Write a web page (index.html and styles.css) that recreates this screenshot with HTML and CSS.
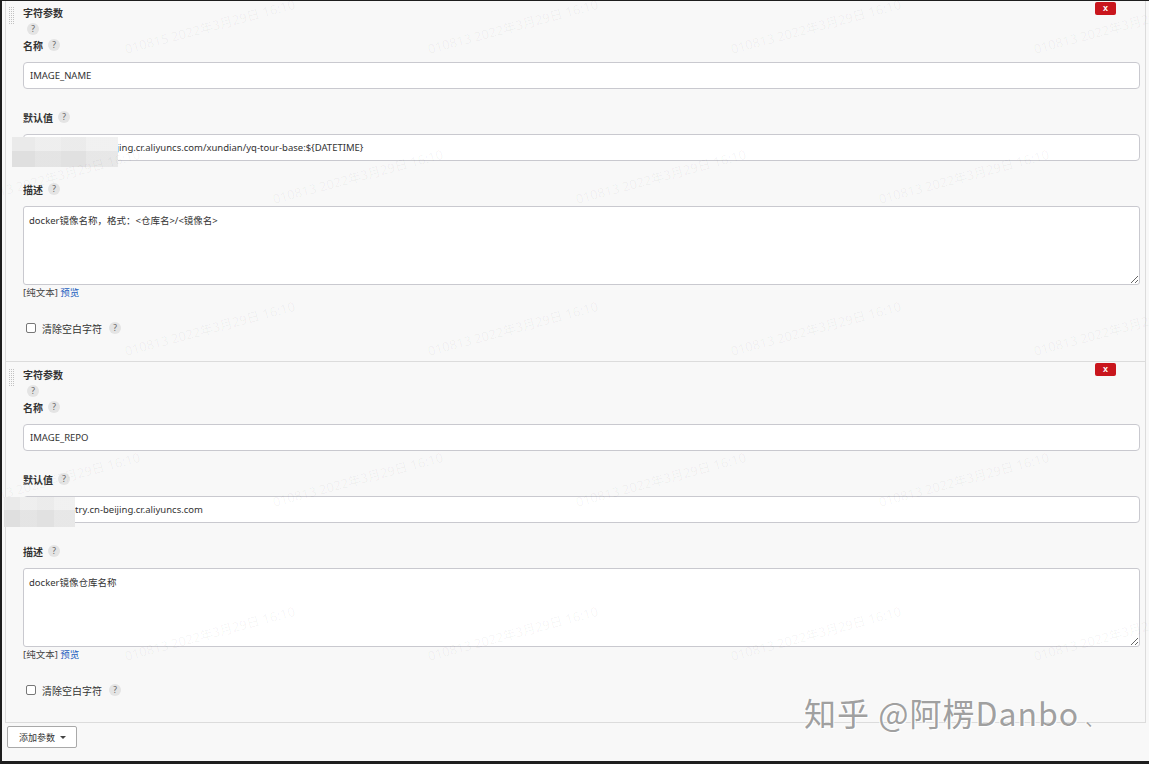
FILE: index.html
```html
<!DOCTYPE html>
<html lang="zh-CN">
<head>
<meta charset="utf-8">
<title>参数</title>
<link rel="stylesheet" href="styles.css">
</head>
<body>
<div class="frame">
  <div class="params">
    <div class="param">
      <div class="handle"></div>
      <div class="pbody">
        <div class="title">字符参数</div>
        <div class="helprow"><span class="help">?</span></div>
        <div class="label">名称 <span class="help">?</span></div>
        <input class="field" type="text" value="IMAGE_NAME">
        <div class="label gap">默认值 <span class="help">?</span></div>
        <div class="fieldwrap">
          <input class="field" type="text" value="xxxx-registry.cn-beijing.cr.aliyuncs.com/xundian/yq-tour-base:${DATETIME}">
          <span class="mosaic m1"></span>
        </div>
        <div class="label gap">描述 <span class="help">?</span></div>
        <textarea class="area">docker镜像名称，格式：&lt;仓库名&gt;/&lt;镜像名&gt;</textarea>
        <div class="afoot">[纯文本] <a class="preview" href="#">预览</a></div>
        <div class="checkrow"><span class="cbox"></span><span class="cl">清除空白字符</span><span class="help">?</span></div>
      </div>
      <span class="delete">x</span>
    </div>
    <div class="param">
      <div class="handle"></div>
      <div class="pbody">
        <div class="title">字符参数</div>
        <div class="helprow"><span class="help">?</span></div>
        <div class="label">名称 <span class="help">?</span></div>
        <input class="field" type="text" value="IMAGE_REPO">
        <div class="label gap">默认值 <span class="help">?</span></div>
        <div class="fieldwrap">
          <input class="field" type="text" value="xxxx-registry.cn-beijing.cr.aliyuncs.com">
          <span class="mosaic m2"></span>
        </div>
        <div class="label gap">描述 <span class="help">?</span></div>
        <textarea class="area">docker镜像仓库名称</textarea>
        <div class="afoot">[纯文本] <a class="preview" href="#">预览</a></div>
        <div class="checkrow"><span class="cbox"></span><span class="cl">清除空白字符</span><span class="help">?</span></div>
      </div>
      <span class="delete">x</span>
    </div>
  </div>
  <button class="add" type="button">添加参数 <span class="caret"></span></button>

  <div class="wm-layer">
    <span class="wm" style="left:125px;top:40px">010815 2022年3月29日 16:10</span>
    <span class="wm" style="left:428px;top:40px">010813 2022年3月29日 16:10</span>
    <span class="wm" style="left:731px;top:40px">010813 2022年3月29日 16:10</span>
    <span class="wm" style="left:1034px;top:40px">010813 2022年3月29日 16:10</span>
    <span class="wm" style="left:-30px;top:190px">010813 2022年3月29日 16:10</span>
    <span class="wm" style="left:273px;top:190px">010813 2022年3月29日 16:10</span>
    <span class="wm" style="left:576px;top:190px">010813 2022年3月29日 16:10</span>
    <span class="wm" style="left:879px;top:190px">010813 2022年3月29日 16:10</span>
    <span class="wm" style="left:125px;top:342px">010813 2022年3月29日 16:10</span>
    <span class="wm" style="left:428px;top:342px">010813 2022年3月29日 16:10</span>
    <span class="wm" style="left:731px;top:342px">010813 2022年3月29日 16:10</span>
    <span class="wm" style="left:1034px;top:342px">010813 2022年3月29日 16:10</span>
    <span class="wm" style="left:-30px;top:493px">010813 2022年3月29日 16:10</span>
    <span class="wm" style="left:273px;top:493px">010813 2022年3月29日 16:10</span>
    <span class="wm" style="left:576px;top:493px">010813 2022年3月29日 16:10</span>
    <span class="wm" style="left:879px;top:493px">010813 2022年3月29日 16:10</span>
    <span class="wm" style="left:125px;top:647px">010813 2022年3月29日 16:10</span>
    <span class="wm" style="left:428px;top:647px">010813 2022年3月29日 16:10</span>
    <span class="wm" style="left:731px;top:647px">010813 2022年3月29日 16:10</span>
    <span class="wm" style="left:1034px;top:647px">010813 2022年3月29日 16:10</span>
  </div>
  <div class="zhihu">知乎 @阿楞Danbo<span class="dot">、</span></div>
</div>
</body>
</html>
```

FILE: styles.css
```css
html, body {
  margin: 0;
  padding: 0;
  background: #1e1e1e;
}

.frame {
  position: relative;
  margin: 1px 0 0 2px;
  height: 760px;
  background: #f8f8f8;
  overflow: hidden;
  font-family: "Noto Sans", "Noto Sans CJK SC", sans-serif;
  font-size: 9.5px;
  color: #333;
}

.params {
  margin-left: 3px;
  width: 1141px;
  box-sizing: border-box;
  border-left: 1px solid #dcdcdc;
  border-right: 1px solid #dcdcdc;
  border-bottom: 1px solid #dcdcdc;
}

.param {
  position: relative;
  display: flex;
  align-items: flex-start;
  padding: 5px 5px 24px 0;
}

.param:first-child {
  padding-top: 4px;
  padding-bottom: 25px;
  border-bottom: 1px solid #dcdcdc;
}

.handle {
  flex: none;
  width: 6px;
  height: 17px;
  margin: 2px 8px 0 3px;
  background-color: #c2c2c2;
  background-image:
    linear-gradient(to right, transparent 1px, #f8f8f8 1px),
    linear-gradient(to bottom, transparent 1px, #f8f8f8 1px);
  background-size: 2px 2px;
}

.pbody {
  flex: 1;
  min-width: 0;
}

.title {
  height: 16px;
  line-height: 16px;
  font-size: 10px;
  font-weight: 700;
  color: #333;
}

.helprow {
  height: 16px;
  display: flex;
  align-items: center;
  padding-left: 4px;
}

.help {
  display: inline-flex;
  align-items: center;
  justify-content: center;
  width: 12px;
  height: 12px;
  border-radius: 50%;
  background: #e4e4e4;
  color: #666;
  font-size: 8.5px;
  font-weight: 400;
  line-height: 1;
}

.label {
  height: 16px;
  display: flex;
  align-items: center;
  gap: 5px;
  font-size: 10px;
  font-weight: 700;
  color: #333;
}

.label.gap {
  margin-top: 20px;
}

.field {
  display: block;
  margin-top: 9px;
  width: 100%;
  height: 27px;
  box-sizing: border-box;
  padding: 0 6px;
  border: 1px solid #c9c9cf;
  border-radius: 4px;
  background: #fff;
  font-family: inherit;
  font-size: 9.5px;
  color: #333;
  outline: none;
}

.fieldwrap {
  position: relative;
}

.mosaic {
  position: absolute;
  display: block;
  background:
    linear-gradient(180deg, rgba(255,255,255,0.25) 0 45%, rgba(0,0,0,0.02) 45% 100%),
    linear-gradient(90deg, #e3e3e3 0 22%, #e9e9e9 22% 46%, #e5e5e5 46% 70%, #ececec 70% 100%);
}

.m1 {
  left: -11px;
  top: 3px;
  width: 106px;
  height: 30px;
}

.m2 {
  left: -19px;
  top: 1px;
  width: 71px;
  height: 30px;
}

.area {
  display: block;
  margin-top: 9px;
  width: 100%;
  height: 79px;
  box-sizing: border-box;
  padding: 6px 5px;
  border: 1px solid #c9c9cf;
  border-radius: 3px;
  background: #fff;
  font-family: inherit;
  font-size: 9.5px;
  color: #333;
  resize: vertical;
  outline: none;
}

.afoot {
  height: 16px;
  line-height: 16px;
  font-size: 9.5px;
  color: #444;
}

.preview {
  color: #1f5fbf;
  text-decoration: none;
}

.checkrow {
  margin-top: 19px;
  height: 16px;
  display: flex;
  align-items: center;
  padding-left: 3px;
}

.cbox {
  width: 8px;
  height: 8px;
  border: 1px solid #777;
  border-radius: 2px;
  background: #fff;
  margin-right: 6px;
}

.cl {
  font-size: 10px;
  color: #333;
  margin-right: 7px;
}

.delete {
  position: absolute;
  top: 1px;
  right: 29px;
  width: 21px;
  height: 13px;
  border-radius: 2px;
  background: #c9161d;
  color: #fff;
  font-size: 9px;
  font-weight: 700;
  line-height: 12px;
  text-align: center;
  font-family: "Liberation Sans", sans-serif;
}

.add {
  display: flex;
  align-items: center;
  gap: 5px;
  margin: 3px 0 0 5px;
  height: 22px;
  width: 70px;
  padding: 0 0 0 11px;
  box-sizing: border-box;
  border: 1px solid #a9a9a9;
  border-radius: 2px;
  background: #fff;
  font-family: inherit;
  font-size: 9px;
  color: #333;
}

.caret {
  width: 0;
  height: 0;
  border-left: 3px solid transparent;
  border-right: 3px solid transparent;
  border-top: 3px solid #444;
}

.wm-layer {
  position: absolute;
  inset: 0;
  pointer-events: none;
}

.wm {
  position: absolute;
  white-space: nowrap;
  font-size: 13px;
  line-height: 16px;
  color: rgba(0, 0, 0, 0.045);
  transform-origin: 0 100%;
  transform: rotate(-15deg);
}

.zhihu {
  position: absolute;
  left: 802px;
  top: 690px;
  font-family: "Noto Sans CJK SC", sans-serif;
  font-size: 32px;
  letter-spacing: 1px;
  line-height: 42px;
  color: #a0a0a0;
  text-shadow: 1px 1px 0 #fff, -1px 0 0 #fff;
  white-space: nowrap;
}

.dot {
  font-size: 18px;
  margin-left: 6px;
}
```
